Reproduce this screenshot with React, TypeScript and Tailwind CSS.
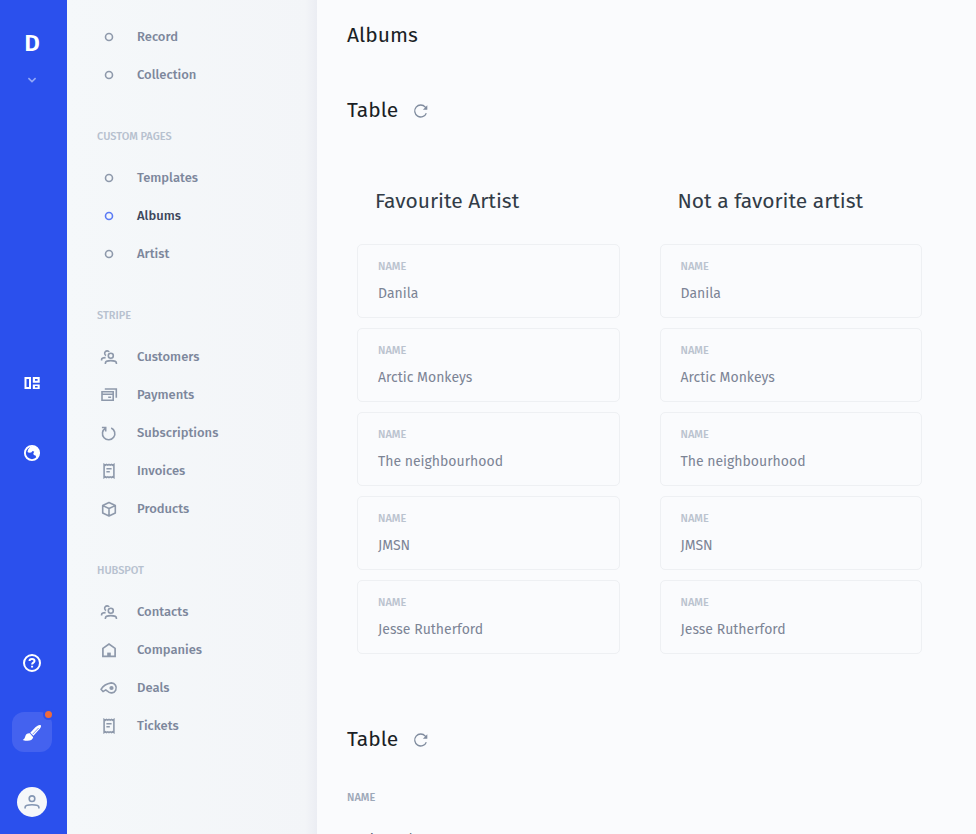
import React from "react";

type IconProps = { children: React.ReactNode; className?: string };

function Icon({ children, className = "" }: IconProps) {
  return (
    <svg
      viewBox="0 0 18 18"
      className={`h-[18px] w-[18px] shrink-0 ${className}`}
      fill="none"
      stroke="currentColor"
      strokeWidth="1.6"
    >
      {children}
    </svg>
  );
}

const icons: Record<string, React.ReactNode> = {
  dot: <circle cx="9" cy="9" r="3.5" strokeWidth="1.6" />,
  people: (
    <>
      <circle cx="10.8" cy="7.7" r="2.5" />
      <path d="M5.400 16v-1c0-1.500 2-2.400 5.400-2.400s5.600.9 5.600 2.400v1" />
      <path d="M6.100 7.600A2.500 2.500 0 1 1 9.200 3.900M1.600 12.400v-.9c0-1.200 1.300-1.800 4-1.900" />
    </>
  ),
  payments: (
    <>
      <path d="M2 5.700h11.200v8.600H2zM2 8.300h11.200M8.200 11.300h2.900" />
      <path d="M4.800 3h11.500v8.800" />
    </>
  ),
  cycle: <path d="M11.200 3.900a6.200 6.200 0 1 1-5.700.3M1.900 3.500h3.800v4" />,
  receipt: (
    <>
      <path d="M4.100 2.500l1.200.7 1.200-.7 1.300.7 1.200-.7 1.200.7 1.300-.7 1.200.7 1.200-.7v13l-1.200-.7-1.200.7-1.300-.7-1.200.7-1.200-.7-1.300.7-1.200-.7-1.200.7z" />
      <path d="M6.400 6.700h5.200M6.400 9.700h3.400" />
    </>
  ),
  box: (
    <path
      d="M9 2.500l6.300 3v7.500L9 15.900l-6.300-2.900V5.500zM2.800 5.600L9 8.500l6.200-2.900M9 8.500v7.300"
      strokeLinejoin="round"
    />
  ),
  home: (
    <>
      <path d="M2.900 15.300V7.400L9 3.100l6.100 4.300v7.900z" strokeWidth="1.700" />
      <path d="M7.200 11.600h3.600v3.700H7.200z" fill="currentColor" stroke="none" />
    </>
  ),
  whistle: (
    <>
      <path
        d="M11.300 3.900a5 5 0 1 1-3.900 8.200L5.800 10.900l-2.800 1.700L1 10.300c2-3.200 6.200-5.700 10.300-6.400z"
        strokeLinejoin="round"
      />
      <circle cx="11.500" cy="9" r="2.100" fill="currentColor" stroke="none" />
    </>
  ),
};

type Item = { icon: string; label: string; active?: boolean };

const topItems: Item[] = [
  { icon: "dot", label: "Record" },
  { icon: "dot", label: "Collection" },
];

const groups: { title: string; items: Item[] }[] = [
  {
    title: "CUSTOM PAGES",
    items: [
      { icon: "dot", label: "Templates" },
      { icon: "dot", label: "Albums", active: true },
      { icon: "dot", label: "Artist" },
    ],
  },
  {
    title: "STRIPE",
    items: [
      { icon: "people", label: "Customers" },
      { icon: "payments", label: "Payments" },
      { icon: "cycle", label: "Subscriptions" },
      { icon: "receipt", label: "Invoices" },
      { icon: "box", label: "Products" },
    ],
  },
  {
    title: "HUBSPOT",
    items: [
      { icon: "people", label: "Contacts" },
      { icon: "home", label: "Companies" },
      { icon: "whistle", label: "Deals" },
      { icon: "receipt", label: "Tickets" },
    ],
  },
];

const artists = ["Danila", "Arctic Monkeys", "The neighbourhood", "JMSN", "Jesse Rutherford"];

function NavItem({ icon, label, active }: Item) {
  return (
    <a className="flex h-[38px] items-center pl-[33px]">
      <Icon className={active ? "text-[#5b7bf5]" : "text-[#8e99ab]"}>{icons[icon]}</Icon>
      <span
        className={`mb-0.5 ml-[19px] text-[13px] leading-none font-medium whitespace-nowrap ${
          active ? "text-[#3d475c]" : "text-[#7d879c]"
        }`}
      >
        {label}
      </span>
    </a>
  );
}

function Rail() {
  return (
    <aside className="flex h-full w-[67px] shrink-0 flex-col items-center bg-[#2b50ed] pr-[3px] text-white">
      <div className="mt-[30px] flex h-[26px] items-center text-[24px] leading-none font-semibold">D</div>
      <svg viewBox="0 0 10 8" className="mt-5 h-2 w-2.5" fill="none" stroke="#93a8f7" strokeWidth="1.6">
        <path d="M1.400 2.200L5 5.600l3.600-3.400" />
      </svg>
      <svg viewBox="0 0 18 18" className="mt-[290px] h-[18px] w-[18px]" fill="currentColor" fillRule="evenodd">
        <path d="M1.500 3H8v12H1.500zM3.500 5v8H6V5zM9.800 3h6.900v5.700H9.800zM12 4.900v1.900h2.600V4.900zM9.800 10.500h6.900V15H9.800zM12 12v1.400h2.600V12z" />
      </svg>
      <svg viewBox="0 0 18 18" className="mt-[52px] h-[18px] w-[18px]">
        <circle cx="9" cy="9" r="7.100" fill="none" stroke="currentColor" strokeWidth="1.9" />
        <path
          d="M9.500 2C13.500 2 16 5.500 16 9c0 2.200-1 4-2.400 5.200l-1.100-2.600-1.700-.6-.5-1.700 1-1.600-1.600-.7-1.500 1.400L6 8.700 4.500 8l.6-2.500L7 3z"
          fill="currentColor"
        />
      </svg>
      <svg viewBox="0 0 20 20" className="mt-[191px] h-5 w-5" fill="none" stroke="currentColor" strokeWidth="2">
        <circle cx="10" cy="10" r="8" />
        <path d="M7.500 8.100c0-1.500 1.100-2.200 2.500-2.200s2.500.8 2.500 2c0 1.700-2.400 1.700-2.400 3.500M10.100 12.700v1.900" />
      </svg>
      <div className="relative mt-[39px] flex h-10 w-10 items-center justify-center rounded-xl bg-[#4462ef]">
        <svg viewBox="0 0 20 20" className="mt-0.5 h-5 w-5" fill="currentColor">
          <path d="M18.800 2.300c-1.700-.8-3.600.5-5.400 2L8.300 9.800l3.100 3L17.600 6c1.100-1.300 1.900-2.700 1.200-3.700zM7.800 10.200c-2.500-.2-3.800.9-4.400 2.700-.5 2-1.200 3.200-2.700 4 4.500 1.700 9.800 1.200 10.500-2.600z" />
          <path d="M10.600 11.200l6-6.200" stroke="#4462ef" strokeWidth=".7" />
        </svg>
        <span className="absolute -top-px right-0 h-[7px] w-[7px] rounded-full bg-[#ee6a3b] ring-2 ring-[#2b50ed]" />
      </div>
      <div className="mt-[35px] flex h-[30px] w-[30px] items-center justify-center rounded-full bg-[#f5f7fa] text-[#8496b3]">
        <Icon>
          <circle cx="9" cy="5.700" r="2.800" />
          <path d="M2.100 15.500v-1.300c0-2 1.900-2.500 6.900-2.500s6.900.5 6.900 2.500v1.300" />
        </Icon>
      </div>
    </aside>
  );
}

function Sidebar() {
  return (
    <nav className="flex h-full w-[250px] shrink-0 bg-linear-to-r from-[#f5f8fa] to-[#f3f5f8]">
      <div className="flex-1 pt-[18px]">
        {topItems.map((item) => (
          <NavItem key={item.label} {...item} />
        ))}
        {groups.map((group) => (
          <section key={group.title}>
            <h3 className="flex h-[65px] items-center pt-[19px] pl-[30px] text-[11px] leading-none font-medium text-[#b7c1cf]">
              {group.title}
            </h3>
            {group.items.map((item) => (
              <NavItem key={item.label} {...item} />
            ))}
          </section>
        ))}
      </div>
      <div className="w-3 bg-linear-to-r from-[#f3f5f8] to-[#ebedf3]" />
    </nav>
  );
}

function Reload() {
  return (
    <svg viewBox="0 0 16 16" className="mt-0.5 ml-[15px] h-4 w-4" fill="none" stroke="#7f8b9e" strokeWidth="1.3">
      <path d="M13.300 10.200A6 6 0 1 1 12.300 4.100l1.200 1.400" />
      <path d="M14.300 2.300v4.400H9.900z" fill="#7f8b9e" stroke="none" />
    </svg>
  );
}

function TableHeading() {
  return (
    <div className="flex h-[30px] items-center">
      <h2 className="text-[21px] leading-none text-[#1b1f26]">Table</h2>
      <Reload />
    </div>
  );
}

function Column({ title }: { title: string }) {
  return (
    <section className="flex-1">
      <h3 className="flex h-[30px] items-center pl-[18px] text-[21px] leading-none whitespace-nowrap text-[#323c47]">
        {title}
      </h3>
      <div className="mt-7 flex flex-col gap-2.5">
        {artists.map((artist) => (
          <article key={artist} className="h-[74px] rounded-[5px] border border-[#eef0f3] pt-[15px] pl-5">
            <div className="text-[11px] leading-[14px] font-medium text-[#bac3cf]">NAME</div>
            <div className="mt-2.5 text-[14px] leading-5 text-[#7c8495]">{artist}</div>
          </article>
        ))}
      </div>
    </section>
  );
}

export default function App() {
  return (
    <div className="flex h-[834px] w-[976px] overflow-hidden bg-[#fafbfd] font-['Fira_Sans','Noto_Sans',sans-serif]">
      <Rail />
      <Sidebar />
      <main className="min-w-0 flex-1 overflow-hidden pt-5 pl-[30px]">
        <h1 className="flex h-[30px] items-center text-[21px] leading-none text-[#1b1f26]">Albums</h1>
        <div className="mt-[45px]">
          <TableHeading />
        </div>
        <div className="mt-[61px] ml-2.5 flex w-[565px] gap-10">
          <Column title="Favourite Artist" />
          <Column title="Not a favorite artist" />
        </div>
        <div className="mt-[70px]">
          <TableHeading />
        </div>
        <div className="mt-[37px] text-[11px] leading-[14px] font-medium text-[#9da8b8]">NAME</div>
        <div className="mt-6 text-[13px] leading-5 text-[#4b5565]">Arctic Monkeys</div>
      </main>
    </div>
  );
}
